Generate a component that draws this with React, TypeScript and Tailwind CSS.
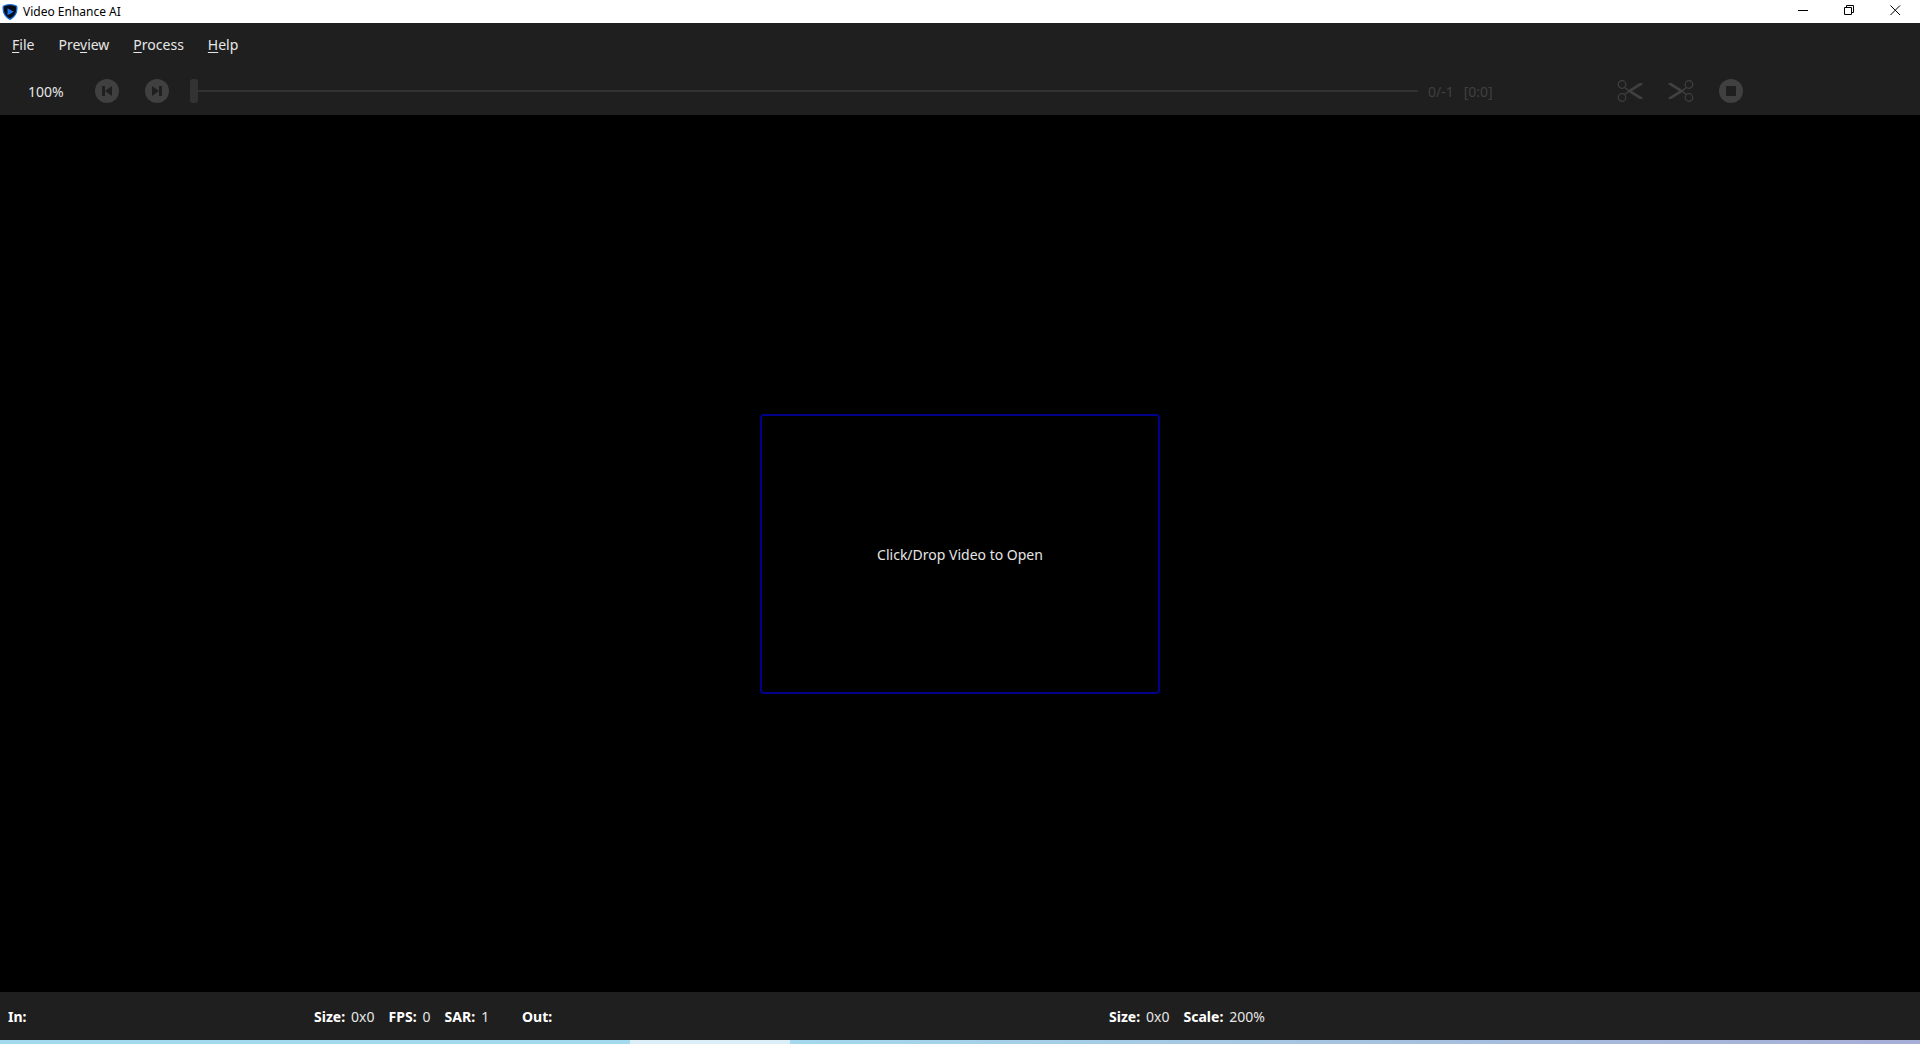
import { useState } from 'react';

const menus = [
  { before: '', key: 'F', after: 'ile' },
  { before: 'Pre', key: 'v', after: 'iew' },
  { before: '', key: 'P', after: 'rocess' },
  { before: '', key: 'H', after: 'elp' },
];

function Logo() {
  return (
    <svg className="h-4 w-4" viewBox="0 0 16 16" fill="none">
      <path
        d="M8 .7C10.5 .7 13.2 1.3 14.7 2.2C15.4 7.5 14.2 12.3 8 15.3C1.8 12.3 .6 7.5 1.3 2.2C2.8 1.3 5.5 .7 8 .7Z"
        fill="#050b18"
        stroke="#1a6fd8"
        strokeWidth="1.3"
      />
      <path d="M5.5 4.3L11.8 7.8L5.5 11.3Z" fill="#1f7bf0" />
    </svg>
  );
}

function SkipIcon({ forward = false }: { forward?: boolean }) {
  return (
    <svg className="h-6 w-6" viewBox="0 0 24 24">
      <circle cx="12" cy="12" r="12" fill="#404040" />
      {forward ? (
        <path d="M7 7L14 12L7 17ZM14 7H17V17H14Z" fill="#1f1f1f" />
      ) : (
        <path d="M7 7H10V17H7ZM17 7L10 12L17 17Z" fill="#1f1f1f" />
      )}
    </svg>
  );
}

function ScissorsIcon({ flip = false }: { flip?: boolean }) {
  return (
    <svg className={`h-6 w-[26px] ${flip ? '-scale-x-100' : ''}`} viewBox="0 0 26 24" fill="none">
      <circle cx="5" cy="5.5" r="3.8" stroke="#404040" strokeWidth="1.2" />
      <circle cx="5" cy="18.5" r="3.8" stroke="#404040" strokeWidth="1.2" />
      <path d="M7.5 8.5L13 12.5M7.5 15.5L13 11.5" stroke="#404040" strokeWidth="1.2" />
      <path d="M10 12L22.5 4H25.5V5.5L15 12L25.5 18.5V20H22.5Z" fill="#404040" />
    </svg>
  );
}

function StopIcon() {
  return (
    <svg className="h-6 w-6" viewBox="0 0 24 24">
      <circle cx="12" cy="12" r="12" fill="#404040" />
      <path d="M7 7H17V17H7Z" fill="#1f1f1f" />
    </svg>
  );
}

function Stat({ label, value }: { label: string; value: string }) {
  return (
    <span className="flex gap-1.5">
      <b className="text-white">{label}</b>
      <span>{value}</span>
    </span>
  );
}

export default function App() {
  const [frame, setFrame] = useState(0);

  return (
    <div className="flex h-screen flex-col bg-black font-['Noto_Sans',sans-serif] text-sm text-[#e6e6e6]">
      {/* Title bar */}
      <header className="flex h-[23px] shrink-0 items-center justify-between bg-white px-0.5 text-black">
        <div className="flex items-center gap-[5px]">
          <Logo />
          <h1 className="text-xs">Video Enhance AI</h1>
        </div>
        <div className="flex h-full pb-0.5">
          <button aria-label="Minimize" className="flex w-[46px] items-center justify-center">
            <svg className="h-[11px] w-[11px]" viewBox="0 0 11 11" stroke="currentColor">
              <path d="M0 5.5H10" />
            </svg>
          </button>
          <button aria-label="Restore" className="flex w-[46px] items-center justify-center">
            <svg className="h-[11px] w-[11px]" viewBox="0 0 11 11" fill="none" stroke="currentColor">
              <path d="M.5 2.5H7.5V9.5H.5ZM2.5 2.5V.5H9.5V7.5H7.5" />
            </svg>
          </button>
          <button aria-label="Close" className="flex w-[46px] items-center justify-center">
            <svg className="h-[11px] w-[11px]" viewBox="0 0 11 11" stroke="currentColor">
              <path d="M.5 .5L10 10M10 .5L.5 10" />
            </svg>
          </button>
        </div>
      </header>

      <nav className="flex h-11 shrink-0 items-center gap-6 bg-[#1f1f1f] px-3">
        {menus.map((menu) => (
          <button key={menu.key}>
            {menu.before}
            <span className="underline underline-offset-2">{menu.key}</span>
            {menu.after}
          </button>
        ))}
      </nav>

      {/* Playback controls */}
      <div className="flex h-12 shrink-0 items-center bg-[#1f1f1f] pr-[177px]">
        <span className="w-[95px] pt-0.5 pl-7">100%</span>
        <div className="flex gap-[26px]">
          <button aria-label="Previous frame">
            <SkipIcon />
          </button>
          <button aria-label="Next frame">
            <SkipIcon forward />
          </button>
        </div>
        <input
          type="range"
          aria-label="Frame"
          min={0}
          max={100}
          value={frame}
          onChange={(e) => setFrame(Number(e.target.value))}
          className="ml-[21px] h-6 min-w-0 flex-1 appearance-none bg-transparent [&::-webkit-slider-runnable-track]:h-0.5 [&::-webkit-slider-runnable-track]:bg-[#333333] [&::-webkit-slider-thumb]:-mt-[11px] [&::-webkit-slider-thumb]:h-6 [&::-webkit-slider-thumb]:w-2 [&::-webkit-slider-thumb]:appearance-none [&::-webkit-slider-thumb]:rounded-[3px] [&::-webkit-slider-thumb]:bg-[#333333]"
        />
        <div className="flex w-[199px] gap-2.5 pt-0.5 pl-2.5 text-[#404040]">
          <span>0/-1</span>
          <span>[0:0]</span>
        </div>
        <div className="flex gap-[25px]">
          <button aria-label="Trim start">
            <ScissorsIcon />
          </button>
          <button aria-label="Trim end">
            <ScissorsIcon flip />
          </button>
          <button aria-label="Stop">
            <StopIcon />
          </button>
        </div>
      </div>

      <main className="flex flex-1 items-center justify-center">
        <button className="h-[280px] w-[400px] rounded border-2 border-[#00008b] pt-0.5">
          Click/Drop Video to Open
        </button>
      </main>

      {/* Input and output info */}
      <footer className="flex h-12 shrink-0 items-center bg-[#1f1f1f] px-2 pt-0.5">
        <b className="w-[306px] text-white">In:</b>
        <div className="flex w-[208px] gap-3.5">
          <Stat label="Size:" value="0x0" />
          <Stat label="FPS:" value="0" />
          <Stat label="SAR:" value="1" />
        </div>
        <b className="w-[587px] text-white">Out:</b>
        <div className="flex gap-3.5">
          <Stat label="Size:" value="0x0" />
          <Stat label="Scale:" value="200%" />
        </div>
      </footer>
      <div className="flex h-1 shrink-0 bg-linear-to-r from-[#a3d9ec] from-40% to-[#a6add6]">
        <div className="ml-[630px] w-40 bg-[#dceef7]" />
      </div>
    </div>
  );
}
